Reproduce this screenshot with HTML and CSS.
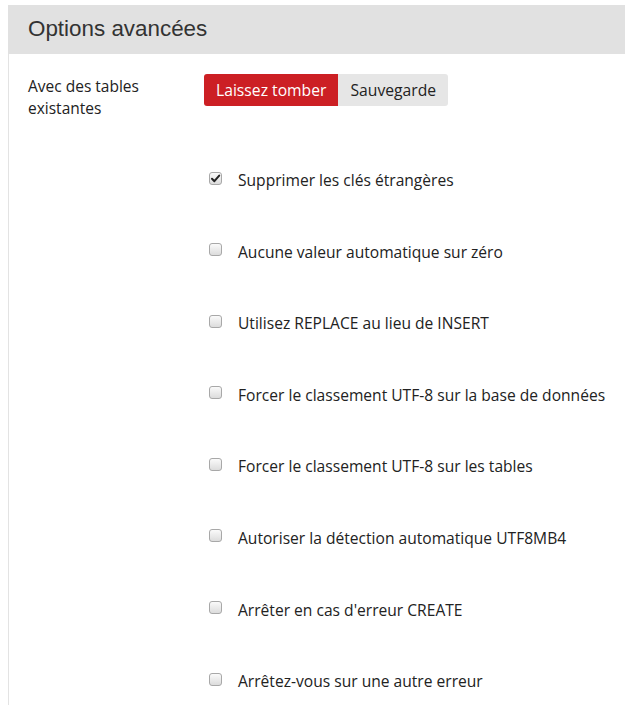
FILE: index.html
```html
<!DOCTYPE html>
<html lang="fr">
<head>
<meta charset="utf-8">
<link rel="stylesheet" href="styles.css">
</head>
<body>
<div class="panel">
  <div class="panel-head">Options avancées</div>
  <div class="panel-body">
    <div class="row">
      <div class="row-label">Avec des tables existantes</div>
      <div class="btn-group">
        <span class="btn btn-active">Laissez tomber</span>
        <span class="btn">Sauvegarde</span>
      </div>
    </div>
    <ul class="opts">
      <li class="opt"><span class="cb cb-checked"><svg viewBox="0 0 13 13" width="13" height="13"><path d="M3 6.8 L5.4 9.2 L10.2 3.6" fill="none" stroke="#222" stroke-width="2" stroke-linecap="round" stroke-linejoin="round"/></svg></span>Supprimer les clés étrangères</li>
      <li class="opt"><span class="cb"></span>Aucune valeur automatique sur zéro</li>
      <li class="opt"><span class="cb"></span>Utilisez REPLACE au lieu de INSERT</li>
      <li class="opt"><span class="cb"></span>Forcer le classement UTF-8 sur la base de données</li>
      <li class="opt"><span class="cb"></span>Forcer le classement UTF-8 sur les tables</li>
      <li class="opt"><span class="cb"></span>Autoriser la détection automatique UTF8MB4</li>
      <li class="opt"><span class="cb"></span>Arrêter en cas d'erreur CREATE</li>
      <li class="opt"><span class="cb"></span>Arrêtez-vous sur une autre erreur</li>
    </ul>
  </div>
</div>
</body>
</html>
```
FILE: styles.css
```css
html, body {
  margin: 0;
  padding: 0;
  background: #fff;
}
body {
  font-family: "Open Sans", sans-serif;
  color: #222;
  overflow: hidden;
}
.panel {
  margin: 5px 0 0 8px;
}
.panel-head {
  background: #e1e1e1;
  height: 49px;
  box-sizing: border-box;
  padding-left: 20px;
  font-family: "Liberation Sans", Arial, sans-serif;
  font-size: 22.4px;
  line-height: 48px;
  color: #333;
}
.panel-body {
  border-left: 1px solid #e3e3e3;
  padding: 20px 0 40px 19px;
}
.row {
  display: flex;
  align-items: flex-start;
}
.row-label {
  width: 140px;
  margin-right: 36px;
  font-size: 15.5px;
  line-height: 22px;
  padding-top: 1px;
}
.btn-group {
  display: flex;
}
.btn {
  display: block;
  height: 32px;
  line-height: 32px;
  font-size: 15.7px;
  padding: 0 12px;
  background: #e6e6e6;
  color: #222;
  border-radius: 0 3px 3px 0;
}
.btn-active {
  background: #cc1f24;
  color: #fff;
  border-radius: 3px 0 0 3px;
}
.opts {
  list-style: none;
  margin: 50px 0 0 176px;
  padding: 0;
  display: flex;
  flex-direction: column;
  gap: 49.6px;
}
.opt {
  display: flex;
  align-items: center;
  height: 22px;
  font-size: 15.6px;
  color: #222;
}
.cb {
  width: 13px;
  height: 13px;
  box-sizing: border-box;
  margin: 0 16px 0 5px;
  border: 1px solid #a8a8a8;
  border-radius: 3px;
  background: linear-gradient(#fafafa, #dcdcdc);
  display: flex;
  position: relative;
  top: -2px;
}
.cb svg {
  margin: -1px;
}
```
